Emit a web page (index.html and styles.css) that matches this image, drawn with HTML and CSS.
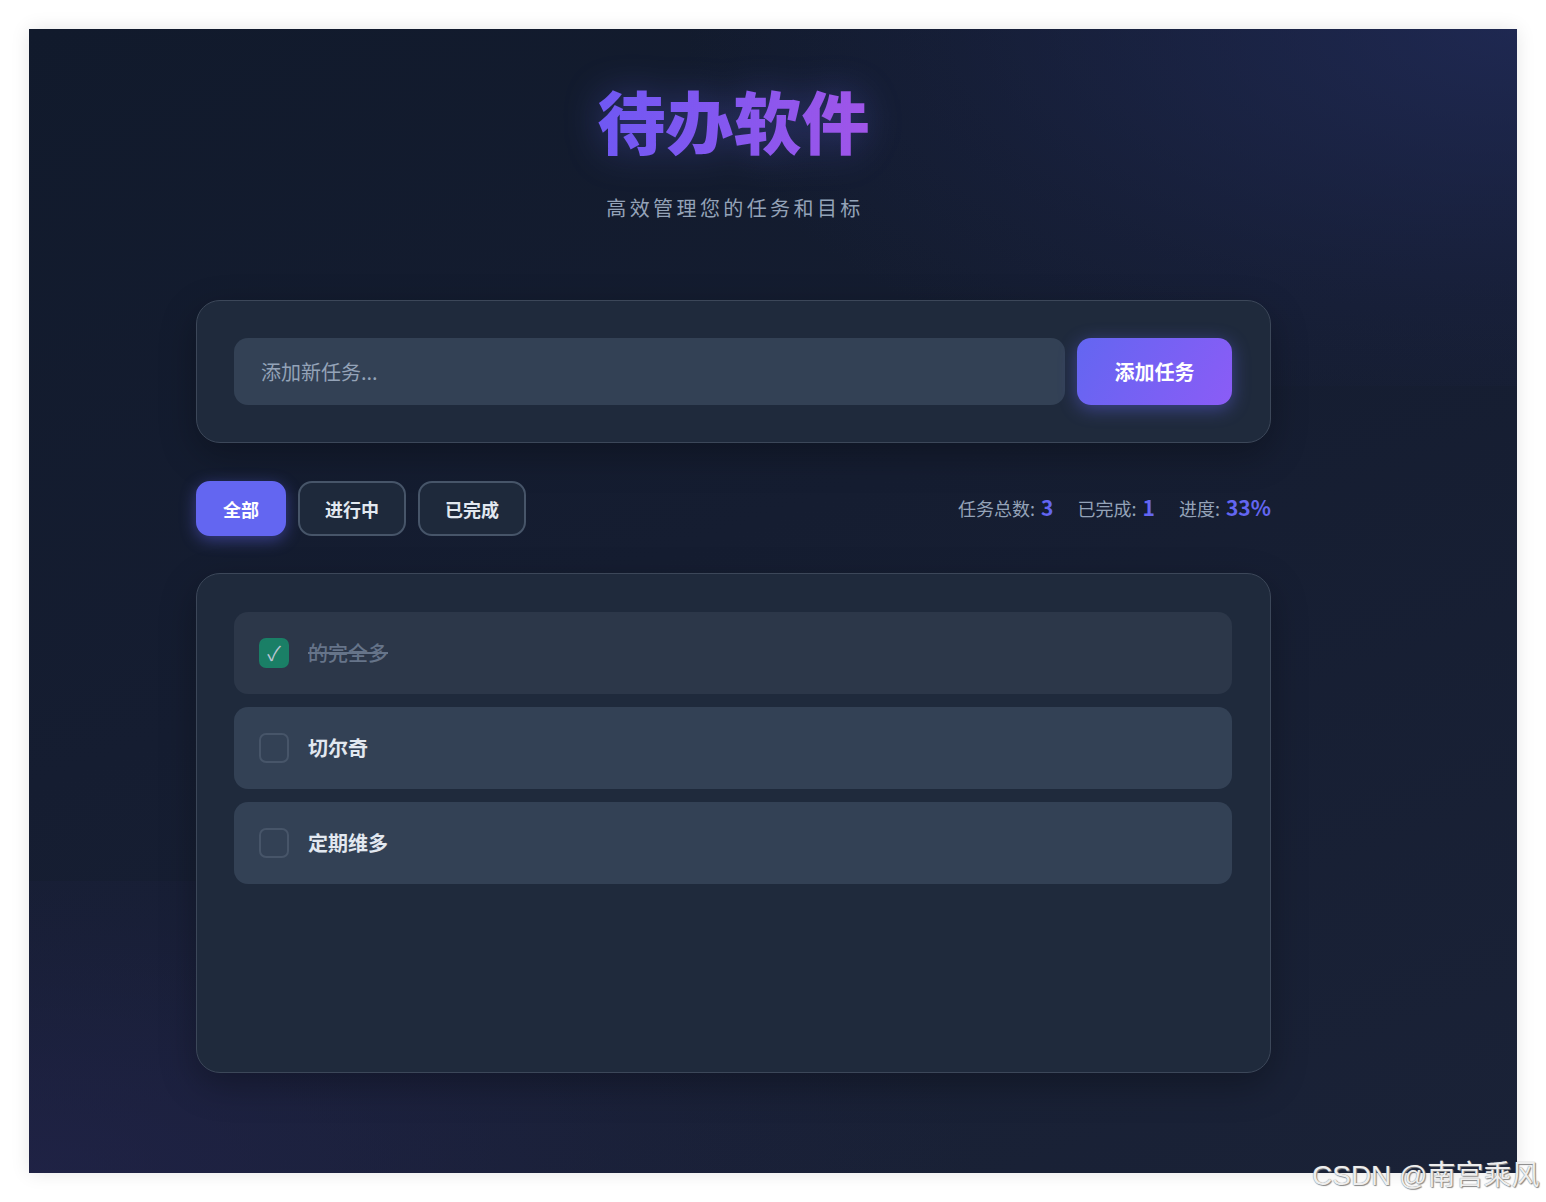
FILE: index.html
```html
<!DOCTYPE html>
<html lang="zh-CN">
<head>
<meta charset="utf-8">
<title>待办软件</title>
<link rel="stylesheet" href="styles.css">
</head>
<body>
<div class="frame">
  <div class="app">
    <header class="header">
      <h1 class="title">待办软件</h1>
      <p class="subtitle">高效管理您的任务和目标</p>
    </header>

    <section class="card add-card">
      <div class="add-row">
        <input class="task-input" type="text" placeholder="添加新任务...">
        <button class="add-btn">添加任务</button>
      </div>
    </section>

    <div class="toolbar">
      <div class="filters">
        <button class="filter active">全部</button>
        <button class="filter">进行中</button>
        <button class="filter">已完成</button>
      </div>
      <div class="stats">
        <span class="stat">任务总数: <b>3</b></span>
        <span class="stat">已完成: <b>1</b></span>
        <span class="stat">进度: <b>33%</b></span>
      </div>
    </div>

    <section class="card list-card">
      <ul class="tasks">
        <li class="task done">
          <span class="check checked">✓</span>
          <span class="task-text">的完全多</span>
        </li>
        <li class="task">
          <span class="check"></span>
          <span class="task-text">切尔奇</span>
        </li>
        <li class="task">
          <span class="check"></span>
          <span class="task-text">定期维多</span>
        </li>
      </ul>
    </section>
  </div>
</div>
<div class="watermark">CSDN @南宫乘风</div>
</body>
</html>
```

FILE: styles.css
```css
* { box-sizing: border-box; }

html, body {
  margin: 0;
  padding: 0;
  background: #ffffff;
  font-family: "Noto Sans CJK SC", "Noto Sans", "Liberation Sans", sans-serif;
}

body {
  width: 1546px;
  height: 1202px;
  position: relative;
  overflow: hidden;
}

.frame {
  margin: 29px 0 0 29px;
  width: 1488px;
  height: 1144px;
  box-shadow: 0 0 18px rgba(0, 0, 0, 0.10);
  background:
    radial-gradient(ellipse 70% 140% at 100% 0%, rgba(34, 44, 92, 0.75), rgba(30, 38, 80, 0.25) 55%, rgba(0, 0, 0, 0) 80%) top / 100% 357px no-repeat,
    radial-gradient(ellipse 75% 160% at 0% 100%, rgba(36, 36, 80, 0.6), rgba(32, 34, 70, 0.25) 55%, rgba(0, 0, 0, 0) 85%) bottom / 100% 292px no-repeat,
    linear-gradient(160deg, #111a2c 0%, #151d31 45%, #1a2237 100%);
  overflow: hidden;
}

.app {
  width: 1075px;
  margin-left: 167px;
}

.header {
  padding-top: 50px;
  text-align: center;
}

.title {
  margin: 0;
  font-size: 68px;
  line-height: 82px;
  font-weight: 900;
  display: inline-block;
  background: linear-gradient(90deg, #6f58f3 0%, #8657ef 50%, #a055e8 100%);
  -webkit-background-clip: text;
  background-clip: text;
  color: transparent;
  filter: drop-shadow(0 0 18px rgba(99, 102, 241, 0.35));
}

.subtitle {
  margin: 33px 0 0;
  font-size: 20px;
  line-height: 28px;
  letter-spacing: 3.4px;
  color: #94a3b8;
  padding-left: 3px;
}

.card {
  background: #1f2a3c;
  border: 1px solid #3c4759;
  border-radius: 24px;
  box-shadow: 0 12px 36px rgba(0, 0, 0, 0.28);
}

.add-card {
  margin-top: 78px;
  padding: 37px 38px 37px 37px;
}

.add-row {
  display: flex;
  gap: 12px;
}

.task-input {
  flex: 1;
  height: 67px;
  border: none;
  outline: none;
  border-radius: 14px;
  background: #334155;
  padding: 0 27px;
  font-family: inherit;
  font-size: 20px;
  color: #e2e8f0;
}

.task-input::placeholder {
  color: #94a3b8;
}

.add-btn {
  width: 155px;
  height: 67px;
  border: none;
  border-radius: 14px;
  background: linear-gradient(120deg, #6366f1 0%, #8b5cf6 100%);
  color: #ffffff;
  font-family: inherit;
  font-size: 20px;
  font-weight: 700;
  box-shadow: 0 4px 18px rgba(99, 102, 241, 0.45);
}

.toolbar {
  margin-top: 38px;
  display: flex;
  justify-content: space-between;
  align-items: center;
}

.filters {
  display: flex;
  gap: 12px;
}

.filter {
  height: 55px;
  padding: 0 25px;
  border: 2px solid #475569;
  border-radius: 14px;
  background: #1e293b;
  color: #e2e8f0;
  font-family: inherit;
  font-size: 18px;
  font-weight: 700;
}

.filter.active {
  width: 90px;
  padding: 0;
  border-color: #6366f1;
  background: #6366f1;
  color: #ffffff;
  box-shadow: 0 4px 16px rgba(99, 102, 241, 0.45);
}

.stats {
  display: flex;
  gap: 24px;
  align-items: baseline;
  font-size: 18px;
  color: #94a3b8;
  margin-top: -3px;
}

.stat b {
  color: #6366f1;
  font-size: 21px;
  font-weight: 700;
  margin-left: 2px;
}

.list-card {
  margin-top: 37px;
  min-height: 500px;
  padding: 38px 38px 38px 37px;
}

.tasks {
  list-style: none;
  margin: 0;
  padding: 0;
  display: flex;
  flex-direction: column;
  gap: 13px;
}

.task {
  height: 82px;
  border-radius: 14px;
  background: #334155;
  display: flex;
  align-items: center;
  padding: 0 25px;
  gap: 19px;
}

.task.done {
  background: #2c3749;
}

.check {
  width: 30px;
  height: 30px;
  border: 2px solid #475569;
  border-radius: 7px;
  display: flex;
  align-items: center;
  justify-content: center;
  flex-shrink: 0;
  font-size: 20px;
  line-height: 1;
}

.check.checked {
  background: #1a7f66;
  border-color: #1a7f66;
  color: #b8c4d2;
}

.task-text {
  font-size: 20px;
  font-weight: 700;
  color: #e2e8f0;
  margin-top: -2px;
}

.task.done .task-text {
  font-weight: 500;
  color: #667489;
  text-decoration: line-through;
}

.watermark {
  position: absolute;
  left: 1312px;
  top: 1153px;
  font-family: "Liberation Sans", "Noto Sans CJK SC", sans-serif;
  font-size: 28px;
  color: #eeeeee;
  text-shadow: 0 0 1px #6b6b6b, 1px 1px 1px #8a8a8a;
  white-space: nowrap;
}
```
